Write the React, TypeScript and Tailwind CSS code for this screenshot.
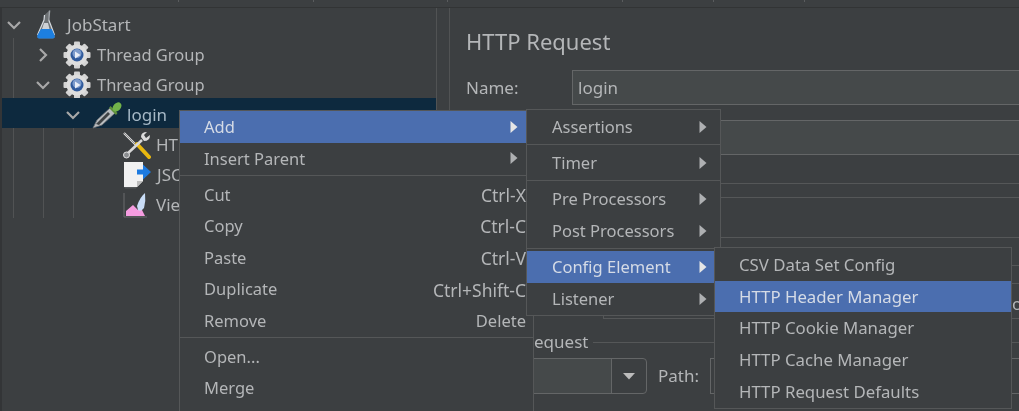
import React from "react";

const Chevron = ({ open }: { open: boolean }) => (
  <svg width="16" height="16" viewBox="0 0 16 16" fill="none" stroke="#a8a8a8" strokeWidth="2.2" className="shrink-0">
    {open ? <path d="M2 5l6 6 6-6" /> : <path d="M5 2l6 6-6 6" />}
  </svg>
);

const Flask = () => (
  <svg width="20" height="30" viewBox="0 0 20 30" className="shrink-0">
    <path d="M13.5 0.5 L12.5 10 L18.5 25 Q19.5 28.5 16.5 28.5 L3.5 28.5 Q0.5 28.5 1.5 25 L8 10 L8.5 5 Z" fill="#c9ced4" fillOpacity="0.35" />
    <path d="M13.6 0.5 L12.8 10" stroke="#9ea3a8" strokeWidth="1.4" />
    <path d="M8.5 5 L8 10 L1.5 25" stroke="#d6dbe0" strokeWidth="1.2" fill="none" />
    <path d="M12.8 10 L18.5 25" stroke="#d6dbe0" strokeWidth="1.2" fill="none" />
    <path d="M5 19 L15.6 19 L18.5 25 Q19.5 28.5 16.5 28.5 L3.5 28.5 Q0.5 28.5 1.5 25 Z" fill="#1d7fe0" />
    <path d="M8 13 L12 13 L13.5 19 L6 19 Z" fill="#e6eaee" fillOpacity="0.8" />
  </svg>
);

const Gear = () => {
  const teeth = [0, 45, 90, 135, 180, 225, 270, 315];
  return (
    <svg width="28" height="28" viewBox="0 0 28 28" className="shrink-0">
      {teeth.map((a) => (
        <rect key={a} x="11" y="0.5" width="6" height="6" rx="1" fill="#d4d4d4" transform={`rotate(${a} 14 14)`} />
      ))}
      <circle cx="14" cy="14" r="10.5" fill="#dedede" />
      <circle cx="14" cy="14" r="6.5" fill="#2f5a9c" />
      <circle cx="14" cy="12.5" r="4.5" fill="#7c9bcc" />
      <path d="M12 10.5 L17.5 14 L12 17.5 Z" fill="#e8eef8" />
    </svg>
  );
};

const Dropper = () => (
  <svg width="30" height="28" viewBox="0 0 30 28" className="shrink-0">
    <path d="M1 27 L5 19 L18 7 L23 12 L10 24 Z" fill="#b9bdc0" stroke="#6d7073" strokeWidth="0.8" />
    <path d="M4 23 L16 11 L18 13 L7 24 Z" fill="#3f4244" />
    <path d="M17 7 L24 14 L25.5 12 L18.5 5 Z" fill="#5f8f3c" />
    <ellipse cx="25" cy="6" rx="3.8" ry="5.2" fill="#72b34a" transform="rotate(42 25 6)" />
  </svg>
);

const Tools = () => (
  <svg width="28" height="28" viewBox="0 0 28 28" className="shrink-0">
    <path d="M1 2 L13 14" stroke="#e2e2e2" strokeWidth="2.2" />
    <path d="M1 2 L13 14" stroke="#555" strokeWidth="0.6" />
    <path d="M14 13 L26 26" stroke="#e9b80f" strokeWidth="4" strokeLinecap="round" />
    <path d="M3 24 L19 9" stroke="#d8d8d8" strokeWidth="2.6" />
    <path d="M18 6 Q18 1 24 1 L21 4 L23 7 L27 4 Q27 10 21 10 Z" fill="#dcdcdc" />
    <circle cx="3.5" cy="24" r="3" fill="#8a8d90" stroke="#e0e0e0" strokeWidth="1" />
  </svg>
);

const Doc = () => (
  <svg width="29" height="28" viewBox="0 0 29 28" className="shrink-0">
    <path d="M1 1 L20 1 L20 20 L14 26 L1 26 Z" fill="#f1f1f1" />
    <path d="M14 26 L14 20 L20 20 Z" fill="#bdbdbd" />
    <path d="M1 26 L14 26 L13 27.5 L2 27.5 Z" fill="#55585a" />
    <path d="M14 8.5 L20 8.5 L20 3.5 L28 11 L20 18.5 L20 13.5 L14 13.5 Z" fill="#1c7ae0" />
  </svg>
);

const Chart = () => (
  <svg width="26" height="28" viewBox="0 0 26 28" className="shrink-0">
    <path d="M1 2 L1 26 L24 26" stroke="#6b6d6f" strokeWidth="1" fill="none" />
    <path d="M3 25 L3 20 L10 14 L15 19 L18 17 L22 25 Z" fill="#f59ce0" />
    <path d="M14 15 Q17 6 22 2 Q23 10 21 17 Q18 21 15 19 Z" fill="#c8dcf6" />
  </svg>
);

const Row = ({
  indent,
  col,
  chevron,
  icon,
  label,
  labelClass,
  className = "",
}: {
  indent: string;
  col: string;
  chevron?: "open" | "closed";
  icon: React.ReactNode;
  label: string;
  labelClass: string;
  className?: string;
}) => (
  <div className={`relative flex h-[30px] items-center whitespace-nowrap ${indent} ${className}`}>
    <div className={`flex shrink-0 justify-start ${col}`}>
      {chevron ? <Chevron open={chevron === "open"} /> : null}
    </div>
    {icon}
    <span className={labelClass}>{label}</span>
  </div>
);

const Arrow = ({ className = "" }: { className?: string }) => (
  <svg width="8" height="14" viewBox="0 0 8 14" className={`shrink-0 ${className}`}>
    <path d="M0.5 1 L7.5 7 L0.5 13 Z" fill="currentColor" />
  </svg>
);

const MainItem = ({
  label,
  shortcut,
  arrow,
  active,
}: {
  label: string;
  shortcut?: string;
  arrow?: boolean;
  active?: boolean;
}) => (
  <div className={`flex h-[31.6px] items-center justify-between pl-[24px] text-[16.5px] ${arrow ? "pr-[15px] pt-[2px]" : "pr-[7px]"} ${active ? "bg-[#4b6eaf] text-[#d5dbe6]" : ""}`}>
    <span>{label}</span>
    {shortcut ? <span className={shortcut === "Delete" ? "text-[16.5px]" : "text-[17.5px]"}>{shortcut}</span> : null}
    {arrow ? <Arrow className={active ? "-mt-[2px] text-[#e6e6e6]" : "-mt-[2px] text-[#aeb0b2]"} /> : null}
  </div>
);

const SubItem = ({ label, active }: { label: string; active?: boolean }) => (
  <div className={`flex h-[32px] items-center justify-between pl-[25px] pr-[13px] text-[16.5px] ${active ? "bg-[#4b6eaf] text-[#d5dbe6]" : ""}`}>
    <span>{label}</span>
    <Arrow className={active ? "text-[#e6e6e6]" : "text-[#aeb0b2]"} />
  </div>
);

const SubSep = () => (
  <div className="flex h-[4px] items-start pt-[1px]">
    <div className="h-px w-full bg-[#555758]" />
  </div>
);

const Leaf = ({ label, active }: { label: string; active?: boolean }) => (
  <div className={`flex h-[31.6px] items-center pl-[24px] text-[16.8px] ${active ? "bg-[#4b6eaf] text-[#d5dbe6]" : ""}`}>{label}</div>
);

export default function App() {
  return (
    <div className="relative h-[411px] w-[1019px] overflow-hidden bg-[#3c3f41] text-[17px] text-[#b4b6b8] [font-family:'Noto_Sans',sans-serif] blur-[0.45px]">
      {/* top strip */}
      <div className="flex h-[8px] border-b border-[#323435]">
        <div className="ml-[178px] h-[2px] w-px bg-[#5a5c5e]" />
        <div className="ml-[134px] h-[2px] w-px bg-[#5a5c5e]" />
        <div className="ml-[133px] h-[2px] w-px bg-[#5a5c5e]" />
        <div className="ml-[174px] h-[2px] w-px bg-[#5a5c5e]" />
        <div className="ml-[90px] h-[2px] w-px bg-[#5a5c5e]" />
        <div className="ml-[90px] h-[2px] w-px bg-[#5a5c5e]" />
      </div>

      <div className="flex h-[403px]">
        {/* tree */}
        <div className="relative h-full w-[436px] shrink-0 border-l-2 border-[#333537] pt-[2px]">
          <div className="absolute left-[11px] top-[30px] h-[180px] w-px bg-[#515354]" />
          <div className="absolute left-[41px] top-[90px] h-[120px] w-px bg-[#515354]" />
          <div className="absolute left-[71px] top-[120px] h-[90px] w-px bg-[#515354]" />
          <Row indent="pl-[4px]" col="w-[30px]" chevron="open" icon={<Flask />} label="JobStart" labelClass="ml-[11px]" />
          <Row indent="pl-[33px]" col="w-[28px]" chevron="closed" icon={<Gear />} label="Thread Group" labelClass="ml-[6px] text-[16.5px]" />
          <Row indent="pl-[33px]" col="w-[28px]" chevron="open" icon={<Gear />} label="Thread Group" labelClass="ml-[6px] text-[16.5px]" />
          <Row indent="pl-[63px]" col="w-[27px]" chevron="open" icon={<Dropper />} label="login" labelClass="ml-[5px]" className="-mt-[2px] bg-[#0d293e] pt-[3px] text-[#a6b8c6]" />
          <div className="mt-[2px]">
            <Row indent="pl-[97px]" col="w-[24px]" icon={<Tools />} label="HT" labelClass="ml-[5px]" />
            <Row indent="pl-[97px]" col="w-[24px]" icon={<Doc />} label="JSC" labelClass="ml-[5px]" />
            <Row indent="pl-[97px]" col="w-[24px]" icon={<Chart />} label="Vie" labelClass="ml-[7px]" />
          </div>
        </div>

        <div className="w-[14px] shrink-0 border-x border-[#515354]" />

        {/* right panel */}
        <div className="min-w-0 flex-1 pl-[16px]">
          <div className="pt-[18px] text-[22px] leading-[30px]">HTTP Request</div>
          <div className="mt-[14px] flex h-[35px] items-center">
            <span className="w-[106px] shrink-0 pt-px">Name:</span>
            <div className="flex h-full flex-1 items-center border border-r-0 border-[#646667] bg-[#45494a] pl-[5px] pt-px">login</div>
          </div>
          <div className="mt-[15px] flex h-[35px]">
            <div className="ml-[106px] h-full flex-1 border border-r-0 border-[#646667] bg-[#45494a]" />
          </div>
          <div className="ml-[106px] mt-[28px] h-px bg-[#555758]" />
          <div className="ml-[106px] mt-[13px] h-px bg-[#555758]" />
          <div className="ml-[106px] mt-[39px] h-px bg-[#555758]" />
          <div className="ml-[106px] mt-[27px] h-px bg-[#555758]" />
          <div className="ml-[137px] mt-[17px] flex h-[36px] items-center justify-end border border-r-0 border-[#555758] pt-[6px]">
            <span className="w-[7px] overflow-hidden">o</span>
          </div>
          <div className="mt-[15px] flex h-[16px] items-center">
            <span className="ml-[68px] shrink-0">equest</span>
            <div className="ml-[5px] h-px flex-1 bg-[#555758]" />
          </div>
          <div className="mt-[8px] flex h-[36px] items-center">
            <div className="ml-[47px] flex h-full w-[134px] overflow-hidden rounded-r-[4px] border border-[#646667]">
              <div className="flex-1 bg-[#45494a]" />
              <div className="flex w-[35px] items-center justify-center border-l border-[#646667]">
                <svg width="14" height="8" viewBox="0 0 14 8"><path d="M1 1h12L7 7.5z" fill="#bcbcbc" /></svg>
              </div>
            </div>
            <span className="ml-[11px]">Path:</span>
            <div className="ml-[11px] h-full flex-1 border border-r-0 border-[#646667]" />
          </div>
          <div className="ml-[214px] mt-[17px] h-[8px] w-[20px] rounded-t-[4px] border border-[#646667]" />
        </div>
      </div>

      {/* main context menu */}
      <div className="absolute left-[179px] top-[110px] h-[310px] w-[355px] border border-[#555758] bg-[#3c3f41]">
        <MainItem label="Add" arrow active />
        <MainItem label="Insert Parent" arrow />
        <div className="my-[1px] h-px bg-[#555758]" />
        <div className="pt-[2px]">
          <MainItem label="Cut" shortcut="Ctrl-X" />
          <MainItem label="Copy" shortcut="Ctrl-C" />
          <MainItem label="Paste" shortcut="Ctrl-V" />
          <MainItem label="Duplicate" shortcut="Ctrl+Shift-C" />
          <MainItem label="Remove" shortcut="Delete" />
        </div>
        <div className="h-px bg-[#555758]" />
        <div className="pt-[3px]">
          <MainItem label="Open..." />
          <MainItem label="Merge" />
        </div>
      </div>

      {/* Add submenu */}
      <div className="absolute left-[526px] top-[109px] w-[195px] border border-[#555758] bg-[#3c3f41] pt-px">
        <SubItem label="Assertions" />
        <SubSep />
        <SubItem label="Timer" />
        <SubSep />
        <SubItem label="Pre Processors" />
        <SubItem label="Post Processors" />
        <SubSep />
        <SubItem label="Config Element" active />
        <SubItem label="Listener" />
      </div>

      {/* Config element submenu */}
      <div className="absolute left-[714px] top-[247px] h-[162px] w-[298px] border border-[#555758] bg-[#3c3f41] pt-px">
        <Leaf label="CSV Data Set Config" />
        <Leaf label="HTTP Header Manager" active />
        <Leaf label="HTTP Cookie Manager" />
        <Leaf label="HTTP Cache Manager" />
        <Leaf label="HTTP Request Defaults" />
      </div>
    </div>
  );
}
